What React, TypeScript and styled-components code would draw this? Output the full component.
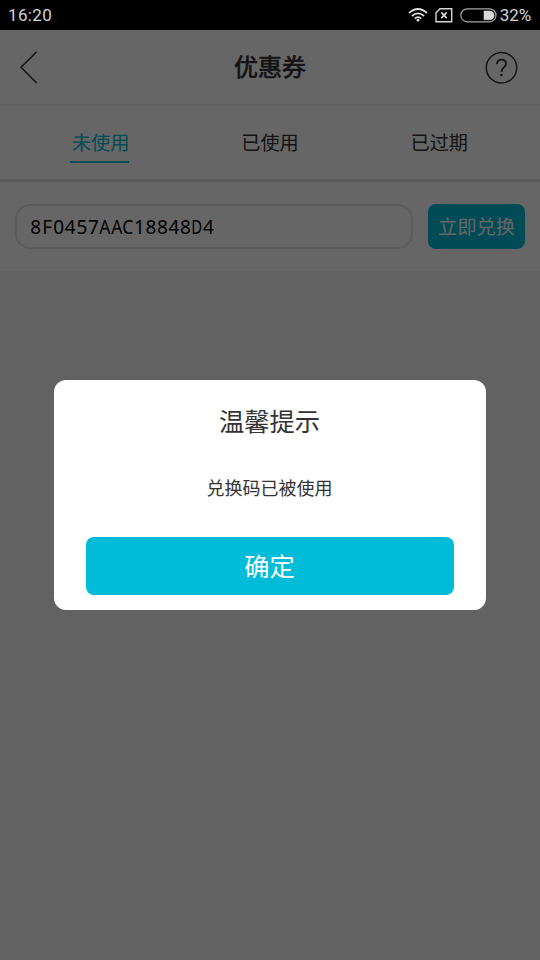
import React from "react";
import styled, { createGlobalStyle } from "styled-components";

const GlobalStyle = createGlobalStyle`
  * { box-sizing: border-box; }
  body { margin: 0; background: #f5f5f5; font-family: "Noto Sans CJK SC", sans-serif; }
  button { border: 0; padding: 0; font-family: inherit; }
`;

const Screen = styled.div`
  display: flex;
  flex-direction: column;
  height: 960px;
  width: 540px;
  overflow: hidden;
`;

const StatusBar = styled.header`
  display: flex;
  align-items: center;
  justify-content: space-between;
  height: 30px;
  padding: 0 9px 0 8px;
  background: #000;
  color: #d2d2d2;
  font: 17px/31px Roboto, sans-serif;
`;

const Clock = styled.span`
  letter-spacing: 0.35px;
`;

const StatusIcons = styled.div`
  display: flex;
  align-items: center;
  height: 30px;
`;

const Percent = styled.span`
  margin-left: 3px;
  letter-spacing: -0.1px;
`;

const NavBar = styled.nav`
  display: flex;
  align-items: center;
  justify-content: space-between;
  height: 75px;
  padding: 0 22px 0 19px;
  background: #fff;
  border-bottom: 1px solid #efefef;
`;

const NavSlot = styled.div`
  display: flex;
  width: 34px;
`;

const Title = styled.h1`
  margin: 0 0 3px 3px;
  font-size: 24px;
  line-height: 36px;
  font-weight: 400;
  -webkit-text-stroke: 0.7px #333;
  color: #333;
`;

const Tabs = styled.div`
  display: grid;
  grid-template-columns: repeat(3, 169.3px);
  justify-content: center;
  height: 77px;
  padding: 20px 2px 0 0;
  background: #fff;
  border-bottom: 3px solid #e0e0e0;
`;

const Tab = styled.div<{ $active?: boolean }>`
  justify-self: center;
  height: 38px;
  padding-left: 2px;
  font-size: 19.2px;
  line-height: 34px;
  color: ${(p) => (p.$active ? "#00bcd8" : "#333")};
  border-bottom: 2px solid ${(p) => (p.$active ? "#00bcd8" : "transparent")};
`;

const RedeemRow = styled.div`
  display: flex;
  gap: 15px;
  height: 89px;
  padding: 22px 15px 0;
  background: #fff;
`;

const CodeField = styled.div`
  flex: 1;
  height: 45px;
  padding-left: 13px;
  border: 2px solid #e6e6e6;
  border-radius: 15px;
  font: 19px/43px "Noto Sans", sans-serif;
  color: #000;
  white-space: nowrap;
`;

const Glyph = styled.span<{ $cell: number; $squeeze: number }>`
  display: inline-flex;
  justify-content: center;
  width: ${(p) => p.$cell}px;
  transform: scaleX(${(p) => p.$squeeze});
`;

const RedeemButton = styled.button`
  width: 97px;
  height: 45px;
  border-radius: 8px;
  background: #00bcd8;
  color: #fff;
  font-size: 19.3px;
  line-height: 43px;
`;

const Overlay = styled.div`
  position: absolute;
  top: 30px;
  left: 0;
  display: flex;
  align-items: flex-start;
  justify-content: center;
  width: 540px;
  height: 930px;
  padding-top: 350px;
  background: rgba(0, 0, 0, 0.6);
`;

const Dialog = styled.section`
  display: flex;
  flex-direction: column;
  align-items: center;
  width: 432px;
  height: 229.5px;
  padding-top: 21px;
  border-radius: 12px;
  background: #fff;
  color: #333;
`;

const DialogTitle = styled.h2`
  margin: 0;
  padding-right: 1px;
  font-size: 25.3px;
  line-height: 38px;
  font-weight: 400;
`;

const Message = styled.p`
  margin: 34px 0 0;
  padding-right: 1px;
  font-size: 18px;
  line-height: 28px;
`;

const ConfirmButton = styled.button`
  width: 368px;
  height: 58px;
  margin-top: 35.5px;
  padding: 0 1px 2px 0;
  border-radius: 8px;
  background: #00bcd8;
  color: #fff;
  font-size: 25.3px;
  line-height: 56px;
`;

const CELL_WIDTH = 11.52;
const SQUEEZE: Record<string, number> = { A: 0.92, C: 0.92, D: 0.78 };

function RedeemCode({ code }: { code: string }) {
  return (
    <CodeField>
      {code.split("").map((c, i) => (
        <Glyph key={i} $cell={CELL_WIDTH} $squeeze={SQUEEZE[c] ?? 1}>{c}</Glyph>
      ))}
    </CodeField>
  );
}

function WifiIcon() {
  return (
    <svg width="20" height="14" viewBox="0 0 20 14" fill="none" stroke="#dedede" strokeWidth="1.7">
      <path d="M1 5Q10 -3 19 5M3.9 8Q10 2.6 16.1 8M6.7 10.6Q10 7.8 13.3 10.6" />
      <circle cx="10" cy="12.2" r="1.4" fill="#dedede" stroke="none" />
    </svg>
  );
}

function SimIcon() {
  return (
    <svg width="18" height="15" viewBox="0 0 18 15" fill="none" stroke="#d6d6d6">
      <path d="M5 .8H16.7V13.8H1V4.8Z" strokeWidth="1.4" />
      <path d="M6.3 4.4l5.4 5.8M11.7 4.4l-5.4 5.8" strokeWidth="1.7" />
    </svg>
  );
}

function BatteryIcon() {
  return (
    <svg width="37" height="15" viewBox="0 0 37 15" fill="none">
      <rect x=".8" y=".8" width="35.2" height="13" rx="6.5" stroke="#a5a5a5" strokeWidth="1.2" />
      <path d="M24 3H29.7a4.3 4.3 0 0 1 0 8.8H24Z" fill="#d8d8d8" stroke="#d8d8d8" strokeWidth=".6" />
    </svg>
  );
}

const IconGap = styled.span`
  width: 7px;
`;

export default function App() {
  return (
    <>
      <GlobalStyle />
      <Screen>
        <StatusBar>
          <Clock>16:20</Clock>
          <StatusIcons>
            <WifiIcon />
            <IconGap />
            <SimIcon />
            <IconGap />
            <BatteryIcon />
            <Percent>32%</Percent>
          </StatusIcons>
        </StatusBar>
        <NavBar>
          <NavSlot>
            <svg width="20" height="34" viewBox="0 0 20 34" fill="none" stroke="#333" strokeWidth="1.5">
              <path d="M17.7 1.7L2 17.3L17.7 33" />
            </svg>
          </NavSlot>
          <Title>优惠券</Title>
          <NavSlot>
            <svg width="34" height="34" viewBox="0 0 34 34" fill="none" stroke="#333">
              <circle cx="17.5" cy="17.7" r="15.2" strokeWidth="1.5" />
              <path d="M13 14.3C13 11.3 14.8 9.7 17.5 9.7S22 11.4 22 13.8C22 17.2 17.4 17.4 17.4 22" strokeWidth="1.8" />
              <circle cx="17.4" cy="25" r="1.3" fill="#333" stroke="none" />
            </svg>
          </NavSlot>
        </NavBar>
        <Tabs>
          <Tab $active>未使用</Tab>
          <Tab>已使用</Tab>
          <Tab>已过期</Tab>
        </Tabs>
        <RedeemRow>
          <RedeemCode code="8F0457AAC18848D4" />
          <RedeemButton>立即兑换</RedeemButton>
        </RedeemRow>
      </Screen>
      <Overlay>
        <Dialog>
          <DialogTitle>温馨提示</DialogTitle>
          <Message>兑换码已被使用</Message>
          <ConfirmButton>确定</ConfirmButton>
        </Dialog>
      </Overlay>
    </>
  );
}
